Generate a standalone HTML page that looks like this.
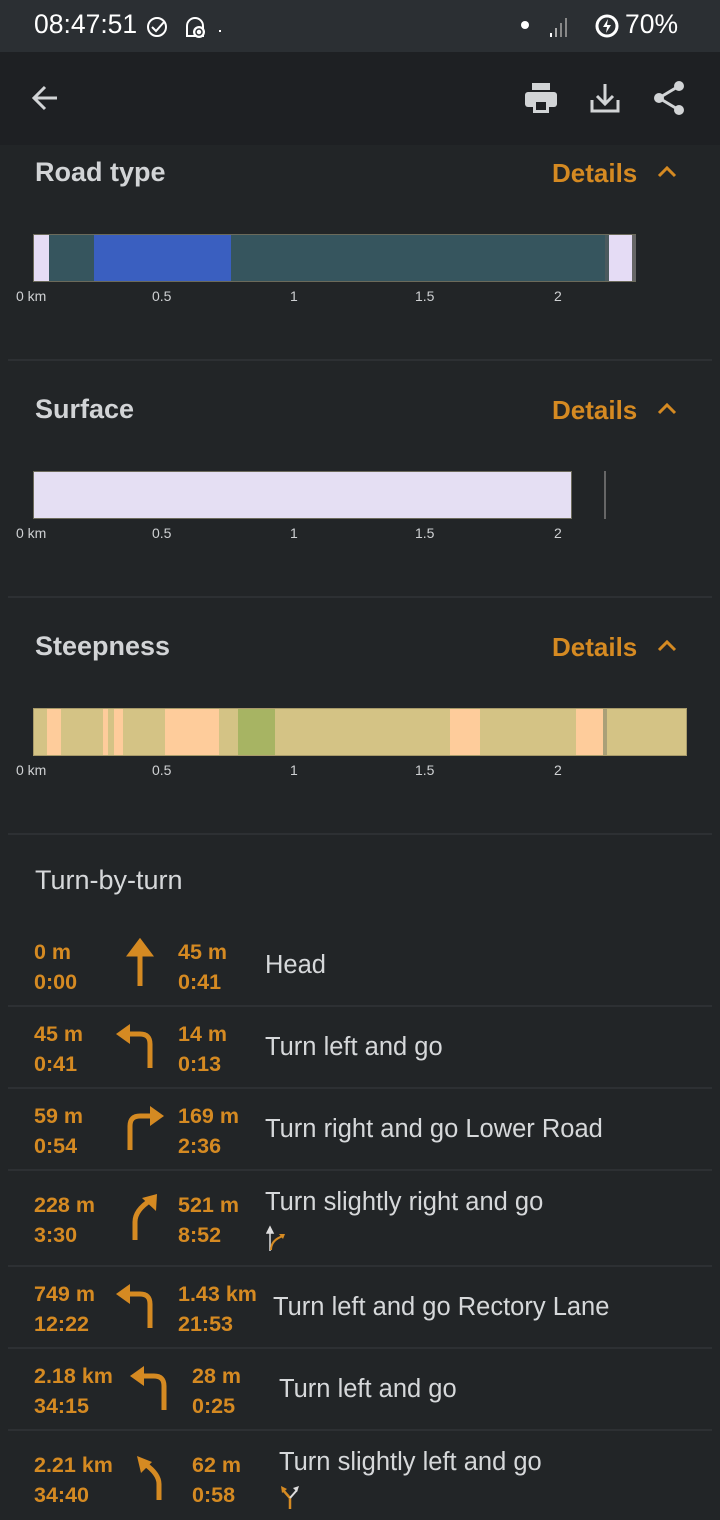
<!DOCTYPE html>
<html><head><meta charset="utf-8"><style>
*{margin:0;padding:0;box-sizing:border-box}
body{width:720px;height:1520px;background:#222527;font-family:"Liberation Sans",sans-serif;position:relative;overflow:hidden;color:#d2d4d6}
.a{position:absolute}
.sb{left:0;top:0;width:720px;height:52px;background:#2b2f33}
.tb{left:0;top:52px;width:720px;height:93px;background:#1e2023}
.h{font-size:27px;color:#d2d4d6;font-weight:bold}
.det{font-size:26px;color:#d58a22;font-weight:bold}
.bar{height:48px;border:1px solid #6b6a5a}
.seg{position:absolute;top:0;height:100%}
.ax{font-size:14px;color:#cfd1d3}
.div{left:8px;width:704px;height:2px;background:#2d3033}
.or{color:#d58a22;font-weight:bold;font-size:21.5px;line-height:30px}
.tx{font-size:25.5px;color:#d6d8da}
</style></head><body>
<div class="a sb"></div>
<div class="a" style="left:34px;top:9px;font-size:26.5px;color:#fff">08:47:51</div>
<svg class="a" style="left:146px;top:15px" width="24" height="24" viewBox="0 0 24 24"><circle cx="11" cy="12" r="9" fill="none" stroke="#fff" stroke-width="2"/><path d="M6 12l4 4 8-9" fill="none" stroke="#fff" stroke-width="2"/></svg>
<svg class="a" style="left:183px;top:14px" width="26" height="26" viewBox="0 0 26 26"><path d="M4 22V12a8 8 0 0116 0v10z" fill="none" stroke="#fff" stroke-width="2"/><circle cx="16" cy="18" r="6" fill="#fff"/><circle cx="16" cy="18" r="3" fill="none" stroke="#2b2f33" stroke-width="1.5"/></svg>
<div class="a" style="left:219px;top:30px;width:2px;height:2px;background:#fff"></div>
<div class="a" style="left:521px;top:21px;width:8px;height:8px;border-radius:50%;background:#fff"></div>
<svg class="a" style="left:548px;top:14px" width="22" height="24"><rect x="2" y="19" width="2" height="4" fill="#fff"/><rect x="7" y="14" width="2" height="9" fill="#aaa"/><rect x="12" y="9" width="2" height="14" fill="#888"/><rect x="17" y="4" width="2" height="19" fill="#888"/></svg>
<svg class="a" style="left:594px;top:13px" width="26" height="26" viewBox="0 0 26 26"><circle cx="13" cy="13" r="10" fill="none" stroke="#fff" stroke-width="3"/><path d="M14 6l-5 8h4l-1 6 5-8h-4z" fill="#fff"/></svg>
<div class="a" style="left:625px;top:9px;font-size:26.5px;color:#fff">70%</div>
<div class="a tb"></div>
<svg class="a" style="left:30px;top:84px" width="30" height="28" viewBox="0 0 30 28"><path d="M27 14H5M15 3L4 14l11 11" fill="none" stroke="#d2d4d6" stroke-width="3"/></svg>
<svg class="a" style="left:524px;top:82px" width="34" height="32" viewBox="0 0 34 32"><rect x="8" y="1" width="18" height="7" fill="#d2d4d6"/><rect x="1" y="10" width="32" height="15" rx="3" fill="#d2d4d6"/><rect x="9" y="19" width="16" height="12" fill="#d2d4d6"/><rect x="12" y="20" width="10" height="8" fill="#1e2023"/></svg>
<svg class="a" style="left:589px;top:82px" width="32" height="32" viewBox="0 0 32 32"><path d="M16 2v20M8 14l8 8 8-8M3 18v11h26V18" fill="none" stroke="#d2d4d6" stroke-width="3"/></svg>
<svg class="a" style="left:652px;top:80px" width="34" height="36" viewBox="0 0 34 36"><circle cx="27" cy="6" r="5" fill="#d2d4d6"/><circle cx="7" cy="18" r="5" fill="#d2d4d6"/><circle cx="27" cy="30" r="5" fill="#d2d4d6"/><path d="M27 6L7 18l20 12" fill="none" stroke="#d2d4d6" stroke-width="3"/></svg>

<div class="a h" style="left:35px;top:157px">Road type</div>
<div class="a det" style="left:552px;top:158px">Details</div>
<svg class="a" style="left:656px;top:163px" width="22" height="16"><path d="M3 13l8-8 8 8" fill="none" stroke="#d58a22" stroke-width="3"/></svg>
<div class="a bar" style="left:33px;top:234px;width:603px">
<div class="seg" style="left:0;width:15px;background:#e5dcf5"></div>
<div class="seg" style="left:15px;width:45px;background:#36555e"></div>
<div class="seg" style="left:60px;width:137px;background:#3a5fc0"></div>
<div class="seg" style="left:197px;width:374px;background:#36555e"></div>
<div class="seg" style="left:571px;width:4px;background:#4a5a5e"></div>
<div class="seg" style="left:575px;width:23px;background:#e5dcf5"></div>
<div class="seg" style="left:598px;width:4px;background:#666"></div>
</div>
<div class="a ax" style="left:16px;top:288px">0 km</div><div class="a ax" style="left:152px;top:288px">0.5</div><div class="a ax" style="left:290px;top:288px">1</div><div class="a ax" style="left:415px;top:288px">1.5</div><div class="a ax" style="left:554px;top:288px">2</div>
<div class="a div" style="top:359px"></div>

<div class="a h" style="left:35px;top:394px">Surface</div>
<div class="a det" style="left:552px;top:395px">Details</div>
<svg class="a" style="left:656px;top:400px" width="22" height="16"><path d="M3 13l8-8 8 8" fill="none" stroke="#d58a22" stroke-width="3"/></svg>
<div class="a bar" style="left:33px;top:471px;width:539px;background:#e5dff3"></div>
<div class="a" style="left:604px;top:471px;width:2px;height:48px;background:#666"></div>
<div class="a ax" style="left:16px;top:525px">0 km</div><div class="a ax" style="left:152px;top:525px">0.5</div><div class="a ax" style="left:290px;top:525px">1</div><div class="a ax" style="left:415px;top:525px">1.5</div><div class="a ax" style="left:554px;top:525px">2</div>
<div class="a div" style="top:596px"></div>

<div class="a h" style="left:35px;top:631px">Steepness</div>
<div class="a det" style="left:552px;top:632px">Details</div>
<svg class="a" style="left:656px;top:637px" width="22" height="16"><path d="M3 13l8-8 8 8" fill="none" stroke="#d58a22" stroke-width="3"/></svg>
<div class="a bar" style="left:33px;top:708px;width:654px;background:#d4c385;border-color:#a89a6a">
<div class="seg" style="left:13px;width:14px;background:#fecc9b"></div>
<div class="seg" style="left:69px;width:5px;background:#fecc9b"></div>
<div class="seg" style="left:80px;width:9px;background:#fecc9b"></div>
<div class="seg" style="left:131px;width:54px;background:#fecc9b"></div>
<div class="seg" style="left:204px;width:37px;background:#a7b463"></div>
<div class="seg" style="left:416px;width:30px;background:#fecc9b"></div>
<div class="seg" style="left:542px;width:27px;background:#fecc9b"></div>
<div class="seg" style="left:569px;width:4px;background:#aaa078"></div>
</div>
<div class="a ax" style="left:16px;top:762px">0 km</div><div class="a ax" style="left:152px;top:762px">0.5</div><div class="a ax" style="left:290px;top:762px">1</div><div class="a ax" style="left:415px;top:762px">1.5</div><div class="a ax" style="left:554px;top:762px">2</div>
<div class="a div" style="top:833px"></div>

<div class="a" style="left:35px;top:865px;font-size:27px;color:#d6d8da">Turn-by-turn</div>

<div class="a or" style="left:34px;top:937px">0 m<br>0:00</div>
<svg class="a" style="left:126px;top:938px" width="28" height="50"><path d="M14 48V10M5 16l9-12 9 12z" fill="#d58a22" stroke="#d58a22" stroke-width="5"/></svg>
<div class="a or" style="left:178px;top:937px">45 m<br>0:41</div>
<div class="a tx" style="left:265px;top:951px">Head</div>
<div class="a div" style="top:1005px"></div>

<div class="a or" style="left:34px;top:1019px">45 m<br>0:41</div>
<svg class="a" style="left:114px;top:1022px" width="42" height="48" viewBox="0 0 42 48"><path d="M36 46V22q0-10-10-10H14" fill="none" stroke="#d58a22" stroke-width="5"/><path d="M2 12l14-10v20z" fill="#d58a22"/></svg>
<div class="a or" style="left:178px;top:1019px">14 m<br>0:13</div>
<div class="a tx" style="left:265px;top:1033px">Turn left and go</div>
<div class="a div" style="top:1087px"></div>

<div class="a or" style="left:34px;top:1101px">59 m<br>0:54</div>
<svg class="a" style="left:124px;top:1104px" width="42" height="48" viewBox="0 0 42 48"><path d="M6 46V22q0-10 10-10h12" fill="none" stroke="#d58a22" stroke-width="5"/><path d="M40 12L26 2v20z" fill="#d58a22"/></svg>
<div class="a or" style="left:178px;top:1101px">169 m<br>2:36</div>
<div class="a tx" style="left:265px;top:1115px">Turn right and go Lower Road</div>
<div class="a div" style="top:1169px"></div>

<div class="a or" style="left:34px;top:1190px">228 m<br>3:30</div>
<svg class="a" style="left:128px;top:1192px" width="34" height="50" viewBox="0 0 34 50"><path d="M7 48V30q0-12 16-22" fill="none" stroke="#d58a22" stroke-width="5"/><path d="M29 2L14 6l14 13z" fill="#d58a22"/></svg>
<div class="a or" style="left:178px;top:1190px">521 m<br>8:52</div>
<div class="a tx" style="left:265px;top:1188px">Turn slightly right and go</div>
<svg class="a" style="left:266px;top:1224px" width="22" height="28"><path d="M4 27V6M1 9l3-6 3 6z" fill="#ddd" stroke="#ddd" stroke-width="1.5"/><path d="M5 26q0-10 12-14" fill="none" stroke="#d58a22" stroke-width="2"/><path d="M19 10l-6 0 4 5z" fill="#d58a22"/></svg>
<div class="a div" style="top:1265px"></div>

<div class="a or" style="left:34px;top:1279px">749 m<br>12:22</div>
<svg class="a" style="left:114px;top:1282px" width="42" height="48" viewBox="0 0 42 48"><path d="M36 46V22q0-10-10-10H14" fill="none" stroke="#d58a22" stroke-width="5"/><path d="M2 12l14-10v20z" fill="#d58a22"/></svg>
<div class="a or" style="left:178px;top:1279px">1.43 km<br>21:53</div>
<div class="a tx" style="left:273px;top:1293px">Turn left and go Rectory Lane</div>
<div class="a div" style="top:1347px"></div>

<div class="a or" style="left:34px;top:1361px">2.18 km<br>34:15</div>
<svg class="a" style="left:128px;top:1364px" width="42" height="48" viewBox="0 0 42 48"><path d="M36 46V22q0-10-10-10H14" fill="none" stroke="#d58a22" stroke-width="5"/><path d="M2 12l14-10v20z" fill="#d58a22"/></svg>
<div class="a or" style="left:192px;top:1361px">28 m<br>0:25</div>
<div class="a tx" style="left:279px;top:1375px">Turn left and go</div>
<div class="a div" style="top:1429px"></div>

<div class="a or" style="left:34px;top:1450px">2.21 km<br>34:40</div>
<svg class="a" style="left:134px;top:1454px" width="30" height="48" viewBox="0 0 30 48"><path d="M25 46V30q0-10-14-20" fill="none" stroke="#d58a22" stroke-width="5"/><path d="M3 2l4 17 11-11z" fill="#d58a22"/></svg>
<div class="a or" style="left:192px;top:1450px">62 m<br>0:58</div>
<div class="a tx" style="left:279px;top:1448px">Turn slightly left and go</div>
<svg class="a" style="left:280px;top:1484px" width="24" height="26"><path d="M10 25V14L3 6" fill="none" stroke="#d58a22" stroke-width="2.5"/><path d="M1 2l1 7 5-4z" fill="#d58a22"/><path d="M10 14l7-8" fill="none" stroke="#ddd" stroke-width="2"/><path d="M19 2l-6 2 4 4z" fill="#ddd"/></svg>
</body></html>
